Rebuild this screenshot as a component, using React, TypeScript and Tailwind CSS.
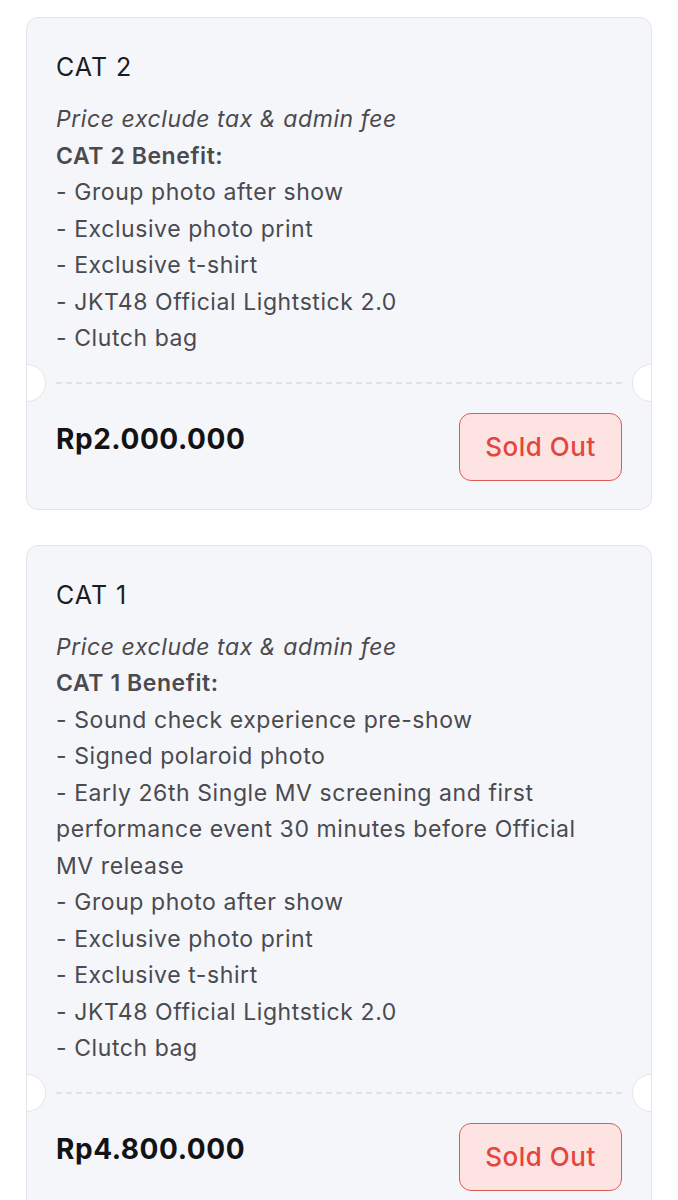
import React from "react";

type Ticket = {
  name: string;
  price: string;
  benefits: string[];
};

const tickets: Ticket[] = [
  {
    name: "CAT 2",
    price: "Rp2.000.000",
    benefits: [
      "Group photo after show",
      "Exclusive photo print",
      "Exclusive t-shirt",
      "JKT48 Official Lightstick 2.0",
      "Clutch bag",
    ],
  },
  {
    name: "CAT 1",
    price: "Rp4.800.000",
    benefits: [
      "Sound check experience pre-show",
      "Signed polaroid photo",
      "Early 26th Single MV screening and first performance event 30 minutes before Official MV release",
      "Group photo after show",
      "Exclusive photo print",
      "Exclusive t-shirt",
      "JKT48 Official Lightstick 2.0",
      "Clutch bag",
    ],
  },
];

const TicketCard = ({ ticket }: { ticket: Ticket }) => {
  return (
    <div className="relative overflow-hidden rounded-[12px] border border-[#e3e5ea] bg-[#f5f6fa]">
      <div className="px-[29px] pt-[34px] pb-[25px]">
        <h3 className="text-[25px] leading-[30px] tracking-[0.04em] text-[#1c1c1e]">{ticket.name}</h3>
        <div className="mt-[19px] mr-[6px] text-[23px] leading-[36.5px] tracking-[0.025em] text-[#4a4a4f]">
          <p className="italic">Price exclude tax &amp; admin fee</p>
          <p className="font-semibold">{ticket.name} Benefit:</p>
          {ticket.benefits.map((b) => (
            <p key={b}>- {b}</p>
          ))}
        </div>
      </div>

      <div className="relative mx-[29px] border-t-2 border-dashed border-[#dfe1e6]" />
      <div className="absolute left-[-19px] bottom-[107px] h-[38px] w-[38px] rounded-full border border-[#e3e5ea] bg-white" />
      <div className="absolute right-[-19px] bottom-[107px] h-[38px] w-[38px] rounded-full border border-[#e3e5ea] bg-white" />

      <div className="flex items-start justify-between px-[29px] pt-[29px] pb-[28px]">
        <span className="pt-[9px] text-[28px] leading-[34px] font-bold tracking-[0.02em] text-[#131316]">
          {ticket.price}
        </span>
        <button className="flex h-[68px] w-[163px] items-center justify-center rounded-[12px] border border-[#dc5b55] bg-[#fde3e2] text-[26px] font-medium tracking-[0.02em] text-[#e5453d]">
          Sold Out
        </button>
      </div>
    </div>
  );
};

export default function App() {
  return (
    <div
      className="min-h-screen bg-white px-[26px] pt-[17px]"
      style={{ fontFamily: "Inter, 'Noto Sans', sans-serif" }}
    >
      <div className="flex flex-col gap-[35px]">
        {tickets.map((t) => (
          <TicketCard key={t.name} ticket={t} />
        ))}
      </div>
    </div>
  );
}
